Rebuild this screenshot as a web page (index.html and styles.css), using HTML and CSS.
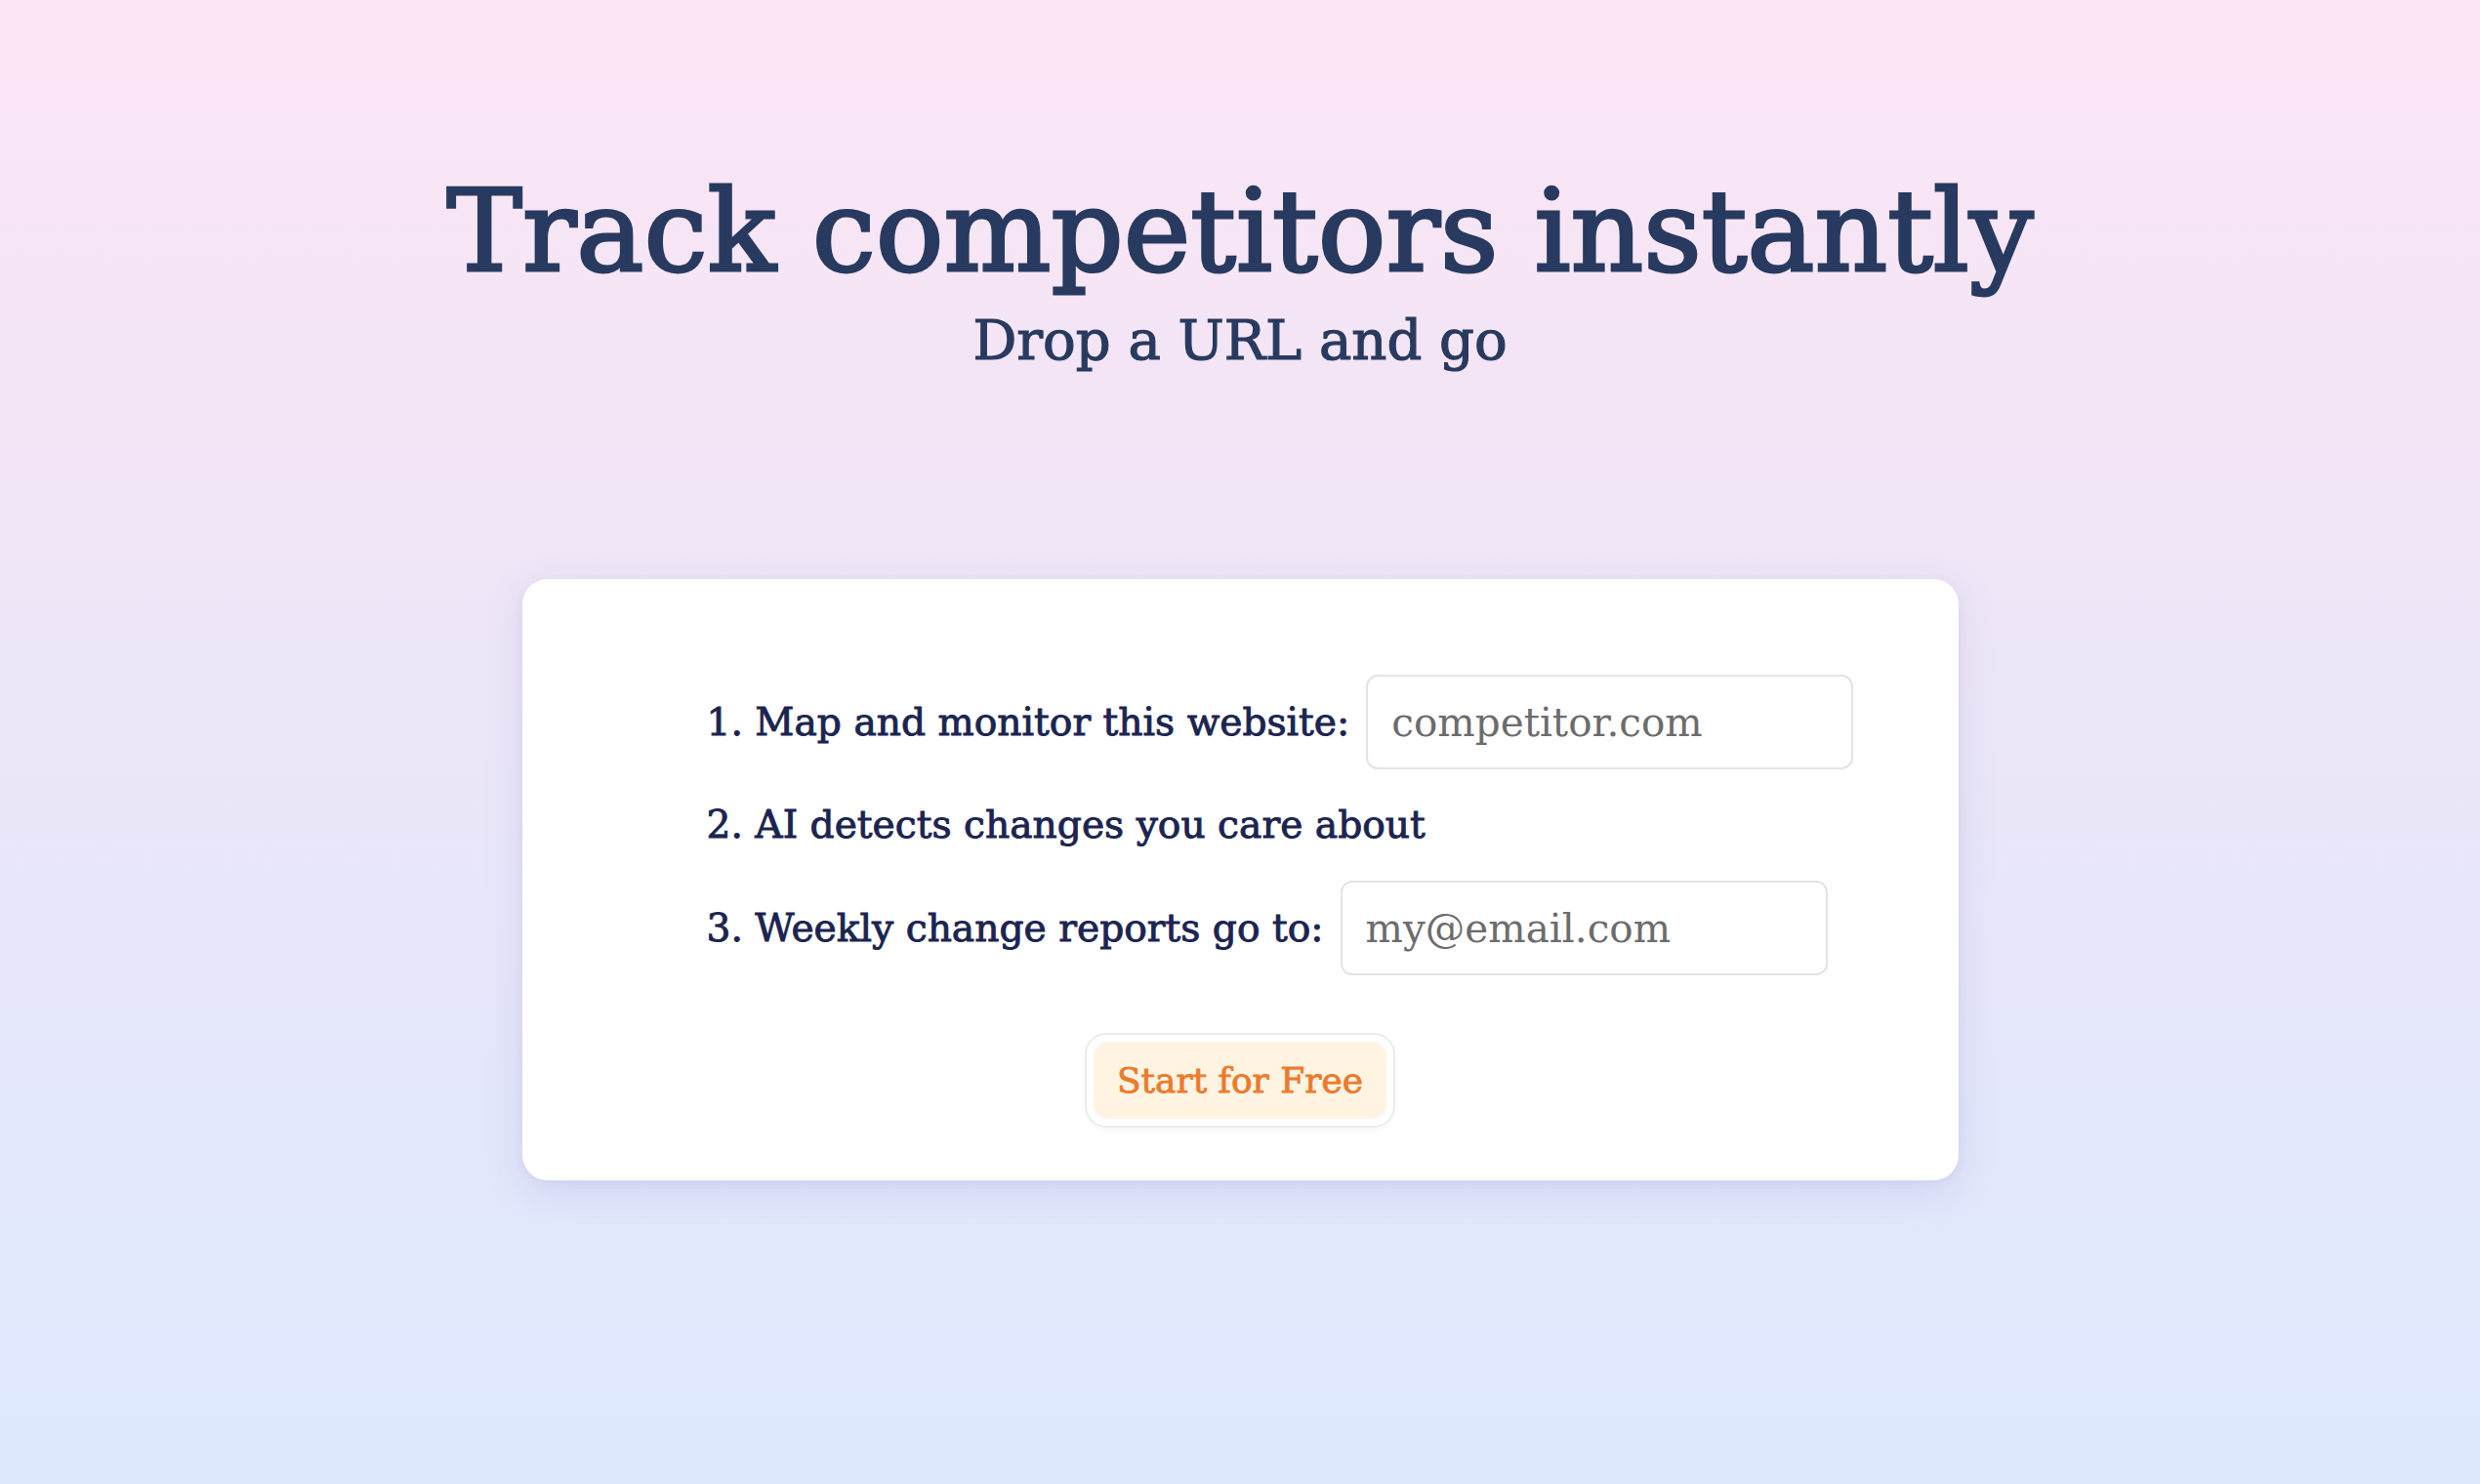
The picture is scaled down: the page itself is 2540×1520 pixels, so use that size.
FILE: index.html
```html
<!DOCTYPE html>
<html lang="en">
<head>
<meta charset="utf-8">
<title>Track competitors instantly</title>
<link rel="stylesheet" href="styles.css">
</head>
<body>
<main class="page">
  <header class="hero">
    <h1 class="title">Track competitors instantly</h1>
    <p class="subtitle">Drop a URL and go</p>
  </header>
  <section class="card">
    <div class="steps">
      <div class="row">
        <label class="label" for="site">1. Map and monitor this website:</label>
        <input class="field" id="site" type="text" placeholder="competitor.com">
      </div>
      <div class="row row-text">
        <span class="label">2. AI detects changes you care about</span>
      </div>
      <div class="row">
        <label class="label" for="mail">3. Weekly change reports go to:</label>
        <input class="field" id="mail" type="email" placeholder="my@email.com">
      </div>
    </div>
    <div class="actions">
      <div class="btn-wrap">
        <button class="btn" type="button">Start for Free</button>
      </div>
    </div>
  </section>
</main>
</body>
</html>
```
FILE: styles.css
```css
* { box-sizing: border-box; }
html, body { margin: 0; padding: 0; }
body {
  min-height: 1520px;
  font-family: "DejaVu Serif", "Liberation Serif", serif;
  background: linear-gradient(to bottom, #fce6f5 0%, #f3e5f6 25%, #ebe6f8 50%, #e3e7fb 75%, #dde8fd 100%);
}
.page {
  display: flex;
  flex-direction: column;
  align-items: center;
  padding-top: 178px;
}
.hero { text-align: center; }
.title {
  margin: 0;
  font-size: 116px;
  line-height: 118px;
  font-weight: 400;
  color: #283a5f;
  -webkit-text-stroke: 3px #283a5f;
}
.subtitle {
  margin: 25px 0 0;
  font-size: 56px;
  line-height: 55px;
  color: #283a5f;
  -webkit-text-stroke: 1.2px #283a5f;
}
.card {
  margin-top: 217px;
  width: 1471px;
  background: #ffffff;
  border-radius: 26px;
  box-shadow: 0 12px 40px rgba(120, 120, 190, 0.16), 0 2px 8px rgba(120, 120, 190, 0.08);
  padding: 98px 0 54px;
}
.steps {
  margin-left: 189px;
  display: flex;
  flex-direction: column;
  gap: 33px;
}
.row {
  display: flex;
  align-items: center;
  gap: 17px;
}
.row-text { height: 48px; }
.label {
  font-size: 39.2px;
  line-height: 48px;
  color: #1b2451;
  -webkit-text-stroke: 0.9px #1b2451;
}
.field {
  width: 499px;
  height: 97px;
  border: 2px solid #e4e4e6;
  border-radius: 12px;
  padding: 0 24px;
  font-family: "DejaVu Serif", "Liberation Serif", serif;
  font-size: 40.5px;
  color: #333;
  background: #fff;
  outline: none;
}
.field::placeholder { color: #6c6c6c; }
.actions {
  display: flex;
  justify-content: center;
  margin-top: 59px;
}
.btn-wrap {
  padding: 7px;
  border: 2px solid #ececee;
  border-radius: 22px;
  background: #fff;
  box-shadow: 0 2px 6px rgba(0, 0, 0, 0.04);
}
.btn {
  display: block;
  border: 0;
  border-radius: 15px;
  background: #fff3e2;
  color: #ec7a2a;
  font-family: "DejaVu Serif", "Liberation Serif", serif;
  font-size: 36px;
  line-height: 43px;
  padding: 18px 24px;
  cursor: pointer;
  -webkit-text-stroke: 0.8px #ec7a2a;
}
```
